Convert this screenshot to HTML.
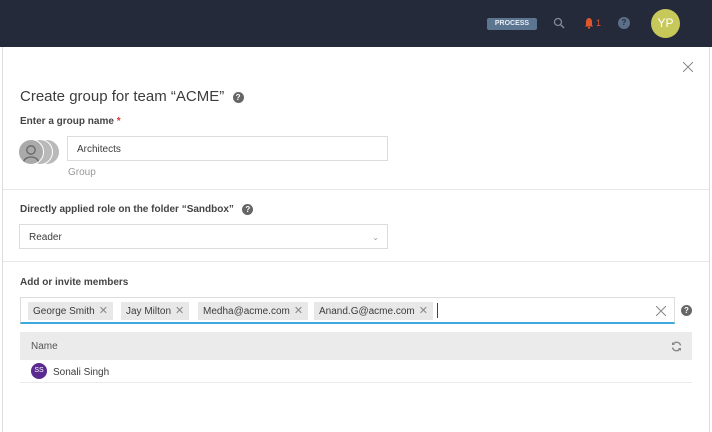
<!DOCTYPE html>
<html><head><meta charset="utf-8"><style>
*{box-sizing:border-box;margin:0;padding:0}
body{width:712px;height:432px;overflow:hidden;background:#fff;font-family:"Liberation Sans",sans-serif;color:#3c3c3c;position:relative}
.abs{position:absolute}
.top{left:0;top:0;width:712px;height:47px;background:#252a3b}
.dlg{left:2px;top:47px;width:708px;height:385px;border-left:1px solid #ddd;border-right:1px solid #ddd;background:#fff}
.lbl{font-size:10px;font-weight:bold;color:#444}
.box{border:1px solid #dcdcdc;background:#fff;font-size:10px;color:#3c3c3c}
.q{display:inline-block;width:11px;height:11px;border-radius:50%;background:#666;color:#fff;font-size:8px;font-weight:bold;text-align:center;line-height:11px}
.sep{left:3px;width:706px;height:1px;background:#e8e8e8}
.tag{position:absolute;top:4px;height:18px;background:#e8e8e8;font-size:10px;line-height:18px;padding:0 5px;color:#3c3c3c;white-space:nowrap}
.tag span{color:#888;margin-left:4px;font-size:11px;font-weight:300}
</style></head><body>
<div class="abs top"></div>
<div class="abs" style="left:487px;top:18px;width:50px;height:12px;background:#5c7591;border-radius:2px;color:#e6ecf3;font-size:7px;font-weight:bold;text-align:center;line-height:12px">PROCESS</div>
<svg class="abs" style="left:553px;top:17px" width="12" height="12"><circle cx="5" cy="5" r="3.5" stroke="#7e8a9c" stroke-width="1.3" fill="none"/><line x1="7.6" y1="7.6" x2="11" y2="11" stroke="#7e8a9c" stroke-width="1.5"/></svg>
<svg class="abs" style="left:584px;top:17px" width="10" height="12"><path d="M5 1C3 1 2 3 2 5v3L1 9.5h8L8 8V5C8 3 7 1 5 1z" fill="#e0562d"/><rect x="4" y="10" width="2" height="1.6" fill="#e0562d"/></svg>
<div class="abs" style="left:596px;top:18px;font-size:9px;color:#e0562d">1</div>
<div class="abs q" style="left:618px;top:17px;width:12px;height:12px;line-height:12px;background:#5b6f88;color:#252a3b">?</div>
<div class="abs" style="left:651px;top:9px;width:29px;height:29px;border-radius:50%;background:#c7c85a;color:#fff;font-size:12px;text-align:center;line-height:29px">YP</div>
<div class="abs dlg"></div>
<svg class="abs" style="left:683px;top:62px" width="10" height="10"><path d="M0 0L10 10M10 0L0 10" stroke="#888" stroke-width="1"/></svg>
<div class="abs" style="left:20px;top:88px;font-size:15px;color:#3c3c3c">Create group for team “ACME” &nbsp;<span class="q" style="vertical-align:1px">?</span></div>
<div class="abs lbl" style="left:20px;top:116px">Enter a group name <span style="color:#d33">*</span></div>
<div class="abs" style="left:34px;top:139px;width:26px;height:26px;border-radius:50%;background:#b9b9b9;border:1px solid #fff"></div>
<div class="abs" style="left:27px;top:139px;width:26px;height:26px;border-radius:50%;background:#b9b9b9;border:1px solid #fff"></div>
<div class="abs" style="left:18px;top:139px;width:26px;height:26px;border-radius:50%;background:#aaa;border:1px solid #fff;overflow:hidden"><svg width="26" height="26"><circle cx="12" cy="10" r="4.2" fill="none" stroke="#666" stroke-width="1.3"/><path d="M4 25c0-5 3-8 8-8s8 3 8 8" fill="none" stroke="#666" stroke-width="1.3"/></svg></div>
<div class="abs box" style="left:67px;top:136px;width:321px;height:25px;padding-left:9px;line-height:25px">Architects</div>
<div class="abs" style="left:68px;top:167px;font-size:10px;color:#999">Group</div>
<div class="abs sep" style="top:189px"></div>
<div class="abs lbl" style="left:20px;top:204px">Directly applied role on the folder “Sandbox” &nbsp;&nbsp;<span class="q">?</span></div>
<div class="abs box" style="left:19px;top:224px;width:369px;height:25px;padding-left:9px;line-height:25px">Reader<span style="position:absolute;right:8px;top:0;color:#999;font-size:8px">&#8964;</span></div>
<div class="abs sep" style="top:261px"></div>
<div class="abs lbl" style="left:20px;top:277px">Add or invite members</div>
<div class="abs box" style="left:20px;top:297px;width:655px;height:27px;border-bottom:2px solid #3fa8dd">
<div class="tag" style="left:7px">George Smith<span>✕</span></div>
<div class="tag" style="left:100px">Jay Milton<span>✕</span></div>
<div class="tag" style="left:177px">Medha@acme.com<span>✕</span></div>
<div class="tag" style="left:293px">Anand.G@acme.com<span>✕</span></div>
<div style="position:absolute;left:416px;top:5px;width:1px;height:15px;background:#444"></div>
<svg style="position:absolute;left:635px;top:8px" width="10" height="10"><path d="M0 0L10 10M10 0L0 10" stroke="#888" stroke-width="1"/></svg>
</div>
<div class="abs q" style="left:681px;top:305px">?</div>
<div class="abs" style="left:20px;top:332px;width:672px;height:28px;background:#ebebeb;font-size:10px;line-height:29px;padding-left:11px;color:#555">Name<svg style="position:absolute;right:10px;top:9px" width="11" height="11"><path d="M9.5 4.5A4 4 0 0 0 2 3.5M1.5 6.5A4 4 0 0 0 9 7.5" stroke="#888" stroke-width="1.4" fill="none"/><path d="M1 1v3h3z M10 10V7H7z" fill="#888"/></svg></div>
<div class="abs" style="left:20px;top:360px;width:672px;height:23px;border-bottom:1px solid #eaeaea"></div>
<div class="abs" style="left:31px;top:363px;width:16px;height:16px;border-radius:50%;background:#5a2a91;color:#fff;font-size:7px;text-align:center;line-height:16px">SS</div>
<div class="abs" style="left:53px;top:367px;font-size:10px;color:#3c3c3c">Sonali Singh</div>
</body></html>
